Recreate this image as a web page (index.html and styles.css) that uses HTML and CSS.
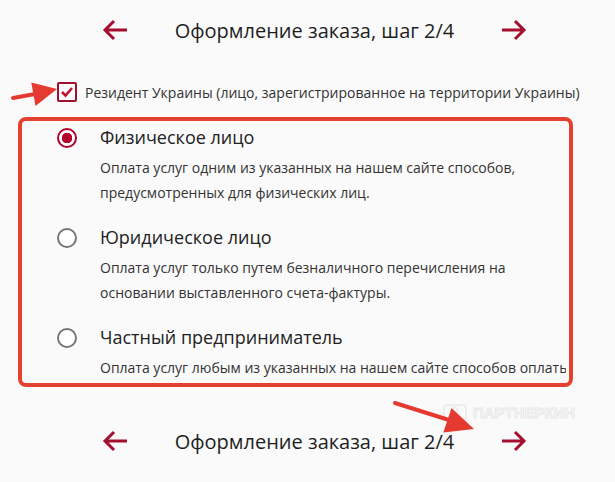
FILE: index.html
```html
<!DOCTYPE html>
<html lang="ru">
<head>
  <meta charset="UTF-8" />
  <title>Оформление заказа, шаг 2/4</title>
  <link rel="stylesheet" href="styles.css">
</head>
<body>
  <div class="page">
    <div class="step-nav">
      <a class="step-arrow" href="#">
        <svg width="26" height="22" viewBox="0 0 26 22"><path d="M3 11 H25 M12 2 L3 11 L12 20" /></svg>
      </a>
      <span class="step-title">Оформление заказа, шаг 2/4</span>
      <a class="step-arrow" href="#">
        <svg width="26" height="22" viewBox="0 0 26 22"><path d="M1 11 H23 M14 2 L23 11 L14 20" /></svg>
      </a>
    </div>

    <label class="resident">
      <span class="checkbox">
        <svg width="16" height="16" viewBox="0 0 16 16"><path d="M3 8 L6.5 11.5 L13 4" /></svg>
      </span>
      <span>Резидент Украины (лицо, зарегистрированное на территории Украины)</span>
    </label>

    <div class="card">
      <div class="option">
        <span class="radio checked"></span>
        <div class="option-text">
          <div class="option-title">Физическое лицо</div>
          <p class="option-desc">Оплата услуг одним из указанных на нашем сайте способов, предусмотренных для физических лиц.</p>
        </div>
      </div>
      <div class="option">
        <span class="radio"></span>
        <div class="option-text">
          <div class="option-title">Юридическое лицо</div>
          <p class="option-desc">Оплата услуг только путем безналичного перечисления на основании выставленного счета-фактуры.</p>
        </div>
      </div>
      <div class="option">
        <span class="radio"></span>
        <div class="option-text">
          <div class="option-title">Частный предприниматель</div>
          <p class="option-desc nowrap">Оплата услуг любым из указанных на нашем сайте способов оплаты.</p>
        </div>
      </div>
    </div>

    <div class="step-nav bottom">
      <a class="step-arrow" href="#">
        <svg width="26" height="22" viewBox="0 0 26 22"><path d="M3 11 H25 M12 2 L3 11 L12 20" /></svg>
      </a>
      <span class="step-title">Оформление заказа, шаг 2/4</span>
      <a class="step-arrow" href="#">
        <svg width="26" height="22" viewBox="0 0 26 22"><path d="M1 11 H23 M14 2 L23 11 L14 20" /></svg>
      </a>
    </div>
  </div>

  <!-- водяной знак -->
  <div class="watermark">
    <svg width="24" height="17" viewBox="0 0 24 17">
      <rect x="1" y="1" width="22" height="15" rx="3" />
      <circle cx="12" cy="6" r="2.5" />
      <path d="M7 14 Q12 8 17 14" />
    </svg>
    <span>ПАРТНЕРКИН</span>
  </div>

  <!-- стрелки-пометки -->
  <svg class="marks" width="615" height="482" viewBox="0 0 615 482">
    <line x1="13" y1="98" x2="35" y2="94" />
    <polygon points="57,89 35.5,106 31.3,82.5" />
    <line x1="395" y1="403" x2="449" y2="420" />
    <polygon points="474,429 443.3,432.6 451.5,407.9" />
  </svg>
</body>
</html>
```

FILE: styles.css
```css
body {
  margin: 0;
  background: #fafafa;
  font-family: "Open Sans", "Noto Sans", sans-serif;
  color: #222;
}
.page {
  padding-top: 8px;
}
.step-nav {
  display: flex;
  align-items: center;
  justify-content: space-between;
  width: 425px;
  height: 44px;
  margin-left: 102px;
}
.step-nav.bottom {
  margin-top: 32px;
}
.step-arrow {
  display: flex;
}
.step-arrow path {
  fill: none;
  stroke: #a30f2d;
  stroke-width: 3;
}
.step-title {
  font-size: 20px;
  color: #1e1e1e;
}
.resident {
  display: flex;
  align-items: center;
  gap: 8px;
  margin: 30px 0 0 57px;
  font-size: 14px;
  color: #333;
}
.checkbox {
  display: flex;
  align-items: center;
  justify-content: center;
  width: 20px;
  height: 20px;
  box-sizing: border-box;
  border: 2px solid #a0112d;
  border-radius: 2px;
  background: #fff;
}
.checkbox path {
  fill: none;
  stroke: #c2102e;
  stroke-width: 2.6;
}
.card {
  box-sizing: border-box;
  width: 555px;
  height: 270px;
  margin: 15px 0 0 18px;
  padding-top: 4px;
  border: 4px solid #e3402f;
  border-radius: 8px;
  overflow: hidden;
}
.option {
  display: flex;
  gap: 23px;
  padding-left: 35px;
  margin-bottom: 20px;
}
.radio {
  flex: none;
  width: 20px;
  height: 20px;
  margin-top: 3px;
  box-sizing: border-box;
  border: 2px solid #777;
  border-radius: 50%;
  background: #fff;
}
.radio.checked {
  border-color: #b3002b;
  background: radial-gradient(circle, #b3002b 0 5px, #fff 5.5px);
}
.option-text {
  width: 466px;
  flex: none;
  overflow: hidden;
}
.option-title {
  font-size: 18px;
  line-height: 24px;
  color: #222;
}
.option-desc {
  margin: 6px 0 0;
  font-size: 14px;
  line-height: 25px;
  color: #333;
}
.option-desc.nowrap {
  white-space: nowrap;
}
.watermark {
  position: absolute;
  left: 443px;
  top: 404px;
  display: flex;
  align-items: center;
  gap: 6px;
  font-family: "Liberation Sans", sans-serif;
  font-weight: bold;
  font-size: 15px;
  color: #f7f7f7;
  -webkit-text-stroke: 1px #e9e9e9;
}
.watermark svg {
  fill: none;
  stroke: #e9e9e9;
  stroke-width: 1.5;
}
.marks {
  position: absolute;
  left: 0;
  top: 0;
  pointer-events: none;
}
.marks line {
  stroke: #e53a2f;
  stroke-width: 4;
  stroke-linecap: round;
}
.marks polygon {
  fill: #e53a2f;
}
```
